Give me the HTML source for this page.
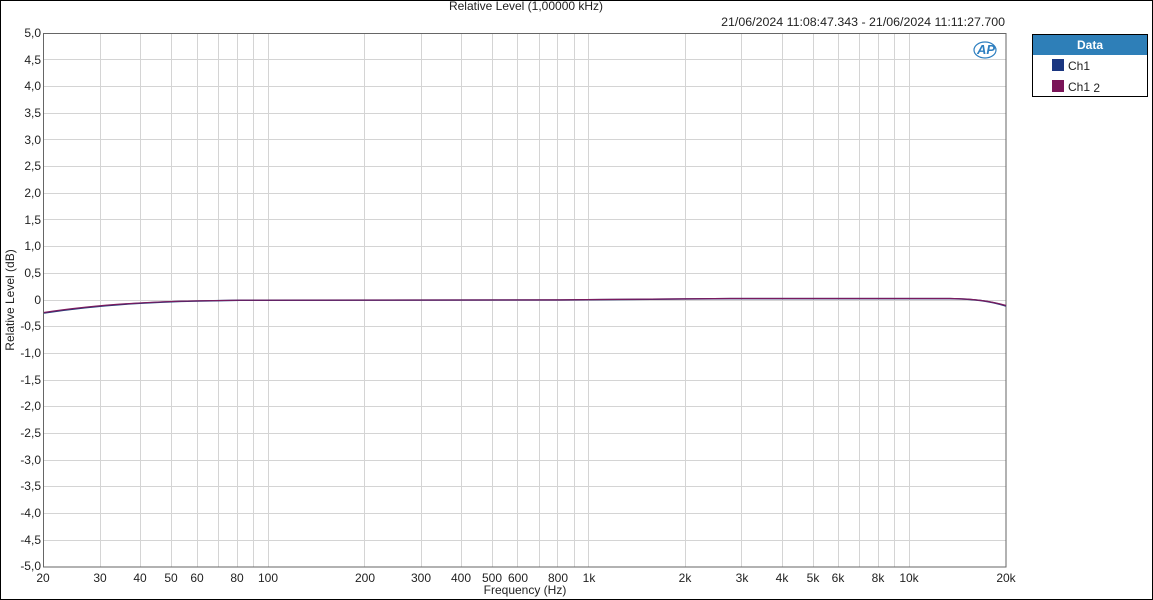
<!DOCTYPE html>
<html><head><meta charset="utf-8"><style>
html,body{margin:0;padding:0;background:#fff}
svg{display:block}
text{font-family:"Liberation Sans",sans-serif;font-size:12px;fill:#222}
</style></head><body>
<svg width="1153" height="600" xmlns="http://www.w3.org/2000/svg">
<rect x="0.5" y="0.5" width="1152" height="599" fill="#fff" stroke="#000"/>
<g stroke="#d4d4d4" stroke-width="1">
<path d="M100.5 33V567M140.5 33V567M171.5 33V567M197.5 33V567M218.5 33V567M237.5 33V567M253.5 33V567M268.5 33V567M364.5 33V567M421.5 33V567M461.5 33V567M492.5 33V567M517.5 33V567M539.5 33V567M557.5 33V567M574.5 33V567M588.5 33V567M685.5 33V567M741.5 33V567M782.5 33V567M813.5 33V567M838.5 33V567M859.5 33V567M878.5 33V567M894.5 33V567M909.5 33V567"/>
<path d="M44 59.5H1006M44 86.5H1006M44 113.5H1006M44 139.5H1006M44 166.5H1006M44 193.5H1006M44 219.5H1006M44 246.5H1006M44 273.5H1006M44 300.5H1006M44 326.5H1006M44 353.5H1006M44 380.5H1006M44 406.5H1006M44 433.5H1006M44 460.5H1006M44 486.5H1006M44 513.5H1006M44 540.5H1006"/>
</g>
<rect x="43.5" y="33.5" width="962.5" height="533.5" fill="none" stroke="#666"/>
<path d="M44 313 C90 306 140 302 200 301 L240 300.3 L560 300 L600 299.6 L730 298.6 L950 298.6 C975 299 990 301 1006 306" fill="none" stroke="#1f3a7a" stroke-width="1.5"/>
<path d="M44 312.5 C90 305.5 140 301.8 200 300.8 L240 300.2 L560 299.9 L600 299.5 L730 298.5 L950 298.5 C975 299 990 301 1006 305.5" fill="none" stroke="#7a1a5e" stroke-width="1.2"/>
<text x="526" y="10" text-anchor="middle">Relative Level (1,00000 kHz)</text>
<text x="1005" y="26" text-anchor="end" style="font-size:12.4px">21/06/2024 11:08:47.343 - 21/06/2024 11:11:27.700</text>
<text x="986" y="54" text-anchor="middle" style="font-style:italic;font-weight:bold;fill:#2e7fc0;font-size:13px">AP</text>
<ellipse cx="985" cy="50" rx="11" ry="8" fill="none" stroke="#2e7fc0" stroke-width="1.2"/>
<g text-anchor="end">
<text x="41" y="37">5,0</text><text x="41" y="64">4,5</text><text x="41" y="90">4,0</text><text x="41" y="117">3,5</text><text x="41" y="144">3,0</text><text x="41" y="170">2,5</text><text x="41" y="197">2,0</text><text x="41" y="224">1,5</text><text x="41" y="250">1,0</text><text x="41" y="277">0,5</text><text x="41" y="304">0</text><text x="41" y="330">-0,5</text><text x="41" y="357">-1,0</text><text x="41" y="384">-1,5</text><text x="41" y="410">-2,0</text><text x="41" y="437">-2,5</text><text x="41" y="464">-3,0</text><text x="41" y="490">-3,5</text><text x="41" y="517">-4,0</text><text x="41" y="544">-4,5</text><text x="41" y="570">-5,0</text>
</g>
<g text-anchor="middle">
<text x="43" y="582">20</text><text x="100" y="582">30</text><text x="140" y="582">40</text><text x="171" y="582">50</text><text x="197" y="582">60</text><text x="237" y="582">80</text><text x="268" y="582">100</text><text x="365" y="582">200</text><text x="421" y="582">300</text><text x="461" y="582">400</text><text x="492" y="582">500</text><text x="518" y="582">600</text><text x="558" y="582">800</text><text x="589" y="582">1k</text><text x="685" y="582">2k</text><text x="742" y="582">3k</text><text x="782" y="582">4k</text><text x="813" y="582">5k</text><text x="838" y="582">6k</text><text x="878" y="582">8k</text><text x="909" y="582">10k</text><text x="1006" y="582">20k</text>
<text x="525" y="594">Frequency (Hz)</text>
<text transform="translate(14,300) rotate(-90)">Relative Level (dB)</text>
</g>
<rect x="1032.5" y="34.5" width="115" height="62" fill="#fff" stroke="#000"/>
<rect x="1033" y="35" width="114" height="20" fill="#2e7fb8"/>
<text x="1090" y="49" text-anchor="middle" style="fill:#fff;font-weight:bold;font-size:12px">Data</text>
<rect x="1052" y="59" width="12" height="12" fill="#1a3680"/>
<text x="1068" y="70" style="font-size:12px">Ch1</text>
<rect x="1052" y="80" width="12" height="12" fill="#7a1458"/>
<text x="1068" y="91" style="font-size:12px">Ch1  <tspan dy="1">2</tspan></text>
</svg>
</body></html>
